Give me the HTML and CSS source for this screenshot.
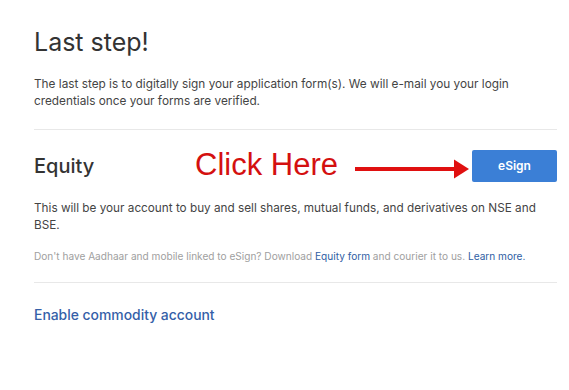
FILE: index.html
```html
<!DOCTYPE html>
<html lang="en">
  <head>
    <meta charset="UTF-8">
    <meta name="viewport" content="width=device-width, initial-scale=1.0">
    <title>Last step</title>
    <link rel="stylesheet" href="styles.css">
  </head>
  <body>
    <div class="page">
      <h1>Last step!</h1>
      <p class="intro">The last step is to digitally sign your application form(s). We will e-mail you your login credentials once your forms are verified.</p>

      <!-- Equity section -->
      <div class="section">
        <div class="section-head">
          <h2>Equity</h2>
          <div class="hint">
            <span class="hint-text">Click Here</span>
            <svg class="hint-arrow" width="114" height="20" viewBox="0 0 114 20">
              <line x1="0" y1="10" x2="101" y2="10" stroke="#e01010" stroke-width="4"/>
              <polygon points="99,0.5 114,10 99,19.5" fill="#e01010"/>
            </svg>
          </div>
          <a href="#" class="btn">eSign</a>
        </div>
        <p class="desc">This will be your account to buy and sell shares, mutual funds, and derivatives on NSE and BSE.</p>
        <p class="note">Don't have Aadhaar and mobile linked to eSign? Download <a href="#">Equity form</a> and courier it to us. <a href="#">Learn more.</a></p>
      </div>

      <a href="#" class="commodity">Enable commodity account</a>
    </div>
  </body>
</html>
```

FILE: styles.css
```css
body {
  margin: 0;
  padding: 0;
  background-color: #fff;
  font-family: 'Inter', 'Noto Sans', sans-serif;
  color: #333;
}
.page {
  width: 523px;
  padding: 27px 0 0 34px;
}
h1 {
  font-size: 25px;
  font-weight: 400;
  margin: 0 0 19px;
  color: #333;
}
.intro {
  font-size: 11.8px;
  line-height: 17px;
  margin: 0;
  padding-bottom: 19px;
  color: #444;
  border-bottom: 1px solid #e8e8e8;
}
.section {
  padding-top: 20px;
  padding-bottom: 20px;
  border-bottom: 1px solid #e8e8e8;
}
.section-head {
  display: flex;
  align-items: center;
  height: 32px;
}
h2 {
  font-size: 20px;
  font-weight: 500;
  margin: 0;
  color: #333;
  width: 161px;
}
.hint {
  display: flex;
  align-items: center;
  flex: 1;
}
.hint-text {
  font-family: 'Liberation Sans', Arial, sans-serif;
  font-size: 31px;
  color: #d41010;
  margin-right: 17px;
  margin-top: -3px;
}
.hint-arrow {
  margin-top: 6px;
}
.btn {
  display: block;
  width: 85px;
  height: 32px;
  line-height: 32px;
  text-align: center;
  background-color: #3b7fd6;
  color: #fff;
  font-size: 12px;
  font-weight: 600;
  text-decoration: none;
  border-radius: 2px;
}
.desc {
  font-size: 11.75px;
  line-height: 17px;
  margin: 18px 0 0;
  color: #444;
}
.note {
  font-size: 10.1px;
  color: #a0a0a0;
  margin: 16px 0 0;
}
.note a {
  color: #2f5ea4;
  text-decoration: none;
}
.commodity {
  display: inline-block;
  margin-top: 24px;
  font-size: 13.9px;
  font-weight: 500;
  color: #3560a8;
  text-decoration: none;
}
```
